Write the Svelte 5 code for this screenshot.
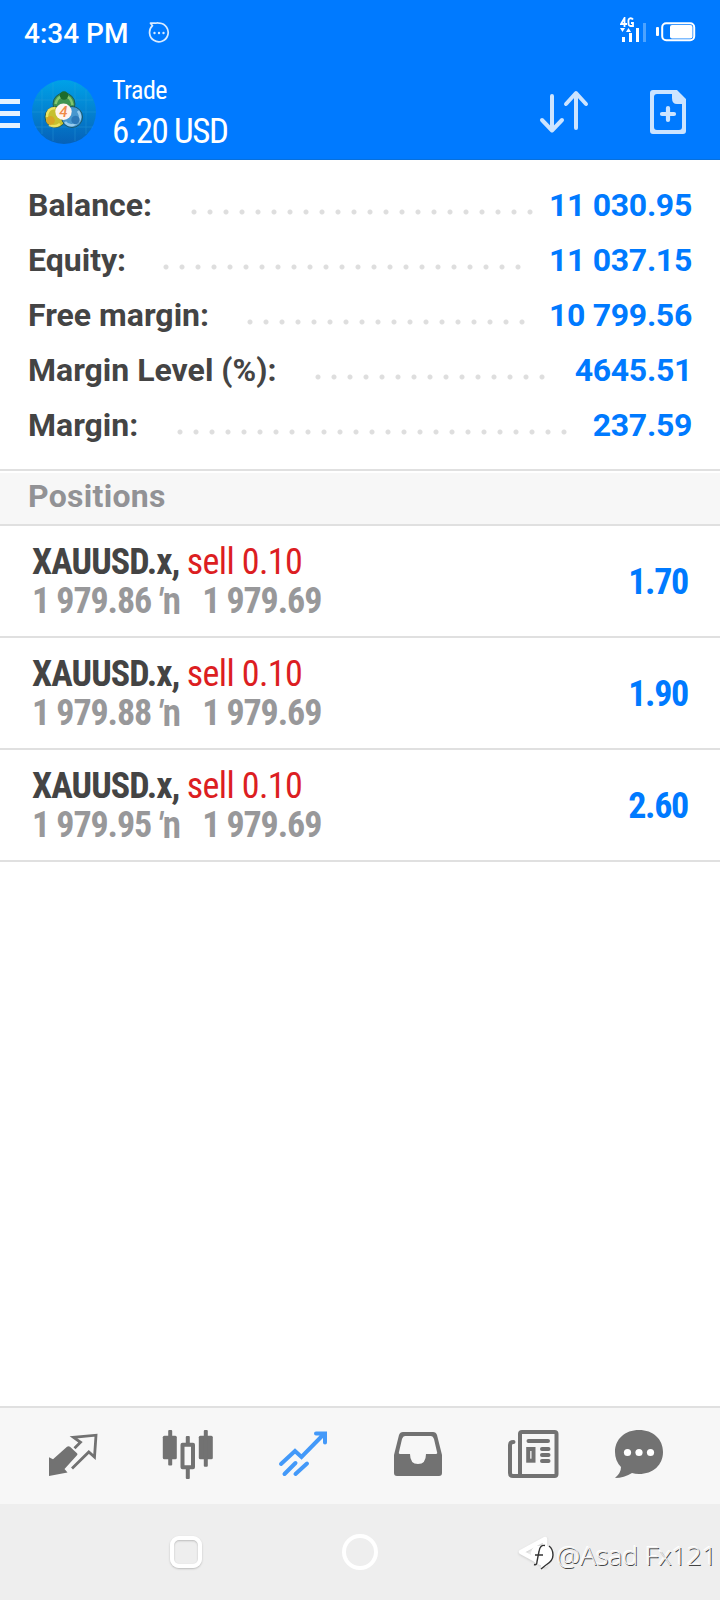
<script lang="ts">
	interface Summary {
		label: string;
		value: string;
		dots: number;
		gap: number;
	}

	const summary: Summary[] = [
		{ label: 'Balance:', value: '11 030.95', dots: 22, gap: 11 },
		{ label: 'Equity:', value: '11 037.15', dots: 23, gap: 23 },
		{ label: 'Free margin:', value: '10 799.56', dots: 18, gap: 19 },
		{ label: 'Margin Level (%):', value: '4645.51', dots: 15, gap: 25 },
		{ label: 'Margin:', value: '237.59', dots: 25, gap: 21 }
	];

	const positions = [
		{ symbol: 'XAUUSD.x,', order: 'sell 0.10', open: '1 979.86', current: '1 979.69', profit: '1.70' },
		{ symbol: 'XAUUSD.x,', order: 'sell 0.10', open: '1 979.88', current: '1 979.69', profit: '1.90' },
		{ symbol: 'XAUUSD.x,', order: 'sell 0.10', open: '1 979.95', current: '1 979.69', profit: '2.60' }
	];

	const tabs = ['quotes', 'charts', 'trade', 'history', 'news', 'messages'];
</script>

<div class="screen">
	<header class="top">
		<div class="status">
			<span class="clock">4:34 PM</span>
			<svg width="22" height="22" viewBox="0 0 22 22">
				<path d="M2.500 1.200h5q2-.6 4 0a9.300 9.300 0 1 1-7 2.500z" fill="none" stroke="#d9ebff" stroke-width="1.700" stroke-linejoin="round" />
				<g fill="#d9ebff"><circle cx="6.500" cy="11" r="1.200" /><circle cx="11" cy="11" r="1.200" /><circle cx="15.500" cy="11" r="1.200" /></g>
			</svg>
			<svg class="signal" width="28" height="26" viewBox="0 0 28 26">
				<path d="M4.500 10V1L1 7h6M13 2.500q-1-1.500-3-1.200-2 .4-1.500 4.200-.2 3.500 2 3.500H13V6h-2" fill="none" stroke="#fff" stroke-width="1.800" />
				<path d="M0 11h5l-2.500 4zM6 15h5l-2.500-4z" fill="#fff" />
				<path d="M2 20h3v5H2zM9 16h3v9H9zM16 11h3v14h-3z" fill="#fff" />
				<path d="M23 6h3v19h-3z" fill="#4da3ff" />
			</svg>
			<svg class="battery" width="40" height="20" viewBox="0 0 40 20">
				<rect x="0" y="5" width="3" height="9" rx="1" fill="#fff" />
				<rect x="6.200" y="1.200" width="32" height="17" rx="4" fill="none" stroke="#fff" stroke-width="2" />
				<rect x="14" y="3" width="22.500" height="13.500" rx="2" fill="#fff" />
			</svg>
		</div>
		<div class="bar">
			<div class="burger"><i></i><i></i><i></i></div>
			<svg width="64" height="64" viewBox="0 0 64 64">
				<defs>
					<linearGradient id="sky" x1="0" y1="0" x2="0" y2="1">
						<stop offset="0" stop-color="#00a2e8" />
						<stop offset="1" stop-color="#0661b8" />
					</linearGradient>
				</defs>
				<circle cx="32" cy="32" r="32" fill="url(#sky)" />
				<path d="M10 10v44M21 3v58M43 3v58M54 10v44M3 20h58M0 32h64M3 47h58" stroke="#33a4dc" stroke-width=".8" opacity=".4" />
				<g stroke="#174a50" stroke-width=".8">
					<circle cx="32" cy="24" r="11" fill="#3f9450" />
					<circle cx="23.500" cy="37" r="10.500" fill="#c6c030" />
					<circle cx="40" cy="37" r="10.500" fill="#4797cf" />
				</g>
				<g fill="none" stroke-width="2.500" opacity=".85">
					<path d="M23.500 24q2-8 8.500-8 7 0 8.500 9" stroke="#90cf77" />
					<path d="M15 37q0-9 8-9M17 45q6 3 11-1" stroke="#f3ea6b" />
					<path d="M46 31q6 9-5 14-5 1-8-3" stroke="#a7d6f4" />
				</g>
				<circle cx="32" cy="15.500" r="4.200" fill="#1d6b2c" />
				<circle cx="18.500" cy="40.500" r="4.400" fill="#d7a526" />
				<circle cx="43.500" cy="40" r="4.200" fill="#2c78b8" />
				<circle cx="31.500" cy="31.800" r="8.200" fill="#fff4ee" />
				<text x="31.500" y="37" text-anchor="middle" font-size="15" font-style="italic" font-weight="500" fill="#ef8a48">4</text>
			</svg>
			<div class="heading">
				<div class="title">Trade</div>
				<div class="total">6.20 USD</div>
			</div>
			<svg width="50" height="44" viewBox="0 0 50 44">
				<path d="M13 6v34M3 30l10 10.500L23 30M37 38V4M27 14L37 3l10 11" fill="none" stroke="#cce4ff" stroke-width="4" stroke-linecap="round" stroke-linejoin="round" />
			</svg>
			<svg class="add" width="36" height="44" viewBox="0 0 36 44">
				<path fill="#cce4ff" fill-rule="evenodd" d="M3 0h24l9 9v32q0 3-3 3H3q-3 0-3-3V3q0-3 3-3zM7 4Q4 4 4 7v30q0 3 3 3h22q3 0 3-3V14h-5q-5 0-5-6V4z" />
				<path d="M18 18v12M12 24h12" stroke="#cce4ff" stroke-width="4.200" stroke-linecap="round" />
			</svg>
		</div>
	</header>

	<section class="summary">
		{#each summary as row}
			<div class="line">
				<span>{row.label}</span>
				<span class="leader" style="width: {row.dots * 16}px; margin-right: {row.gap}px"></span>
				<span class="value">{row.value}</span>
			</div>
		{/each}
	</section>

	<h2 class="section">Positions</h2>

	<main class="list">
		{#each positions as pos}
			<article class="position">
				<div>
					<div class="row"><b>{pos.symbol}</b> <span class="sell">{pos.order}</span></div>
					<div class="row prices">
						<span>{pos.open}</span><span class="mark"><i>′</i>n</span><span>{pos.current}</span>
					</div>
				</div>
				<div class="profit">{pos.profit}</div>
			</article>
		{/each}
	</main>

	<nav class="tabs">
		{#each tabs as tab}
			<div class="tab" class:active={tab === 'trade'}>
				<svg width="56" height="56" viewBox="0 0 56 56">
					{#if tab === 'quotes'}
						<path d="M4 28.300l4 2 14-12.500q1.500-1 3 0l7 6.500q1 1 0 2L19.500 40l3 3.500L4 47z" fill="currentColor" />
						<path d="M29.500 19.300l6-6-7-5L51 6.200 49.500 28l-5.700-5L27 39.500" fill="none" stroke="currentColor" stroke-width="2.800" />
					{:else if tab === 'charts'}
						<g fill="currentColor">
							<rect x="2.800" y="6.700" width="14" height="23.500" rx="1.500" />
							<rect x="8.200" y="1" width="4" height="35.500" rx="1" />
							<rect x="38.800" y="6.700" width="14" height="23.500" rx="1.500" />
							<rect x="43.800" y="1" width="4" height="36.700" rx="1" />
							<rect x="25.800" y="7" width="4" height="8" rx="1" />
							<rect x="25.800" y="39" width="4" height="11" rx="1" />
						</g>
						<rect x="22.500" y="15.700" width="10.500" height="22.500" fill="none" stroke="currentColor" stroke-width="4" stroke-linejoin="round" />
					{:else if tab === 'trade'}
						<path d="M6 35l14-13 6.500 6L48 6M41 4.500h9v9M20.500 34l-11 11M32 34.500L20.500 45" fill="none" stroke="currentColor" stroke-width="4" stroke-linecap="round" />
					{:else if tab === 'history'}
						<path fill-rule="evenodd" d="M13 3h30q3 0 4 3l5 20v18q0 3-3 3H7q-3 0-3-3V26L9 6q1-3 4-3zM15 7q-2 0-3 3L9 23q-1 2 2 2h9q0 10 8 10t8-10h9q3 0 2-2L44 10q-1-3-3-3z" fill="currentColor" />
					{:else if tab === 'news'}
						<g fill="none" stroke="currentColor" stroke-width="4" stroke-linecap="round">
							<rect x="15" y="3" width="36.500" height="44" rx="2" />
							<path d="M8.500 13Q5 13 5 16v28q0 3 3 3h8M23.500 12H43M37 20h6.500M37 26h6.500M37 32h6.500" />
							<rect x="23.200" y="20" width="5.300" height="11.700" />
						</g>
					{:else}
						<path d="M28 1c14 0 24 9 24 22S42 45 28 45q-4 0-7-1-8 5-17 5 6-5 6-11Q4 32 4 23C4 10 14 1 28 1z" fill="currentColor" />
						<g fill="#fff"><circle cx="16.500" cy="23.500" r="3.600" /><circle cx="28" cy="23.500" r="3.600" /><circle cx="39.500" cy="23.500" r="3.600" /></g>
					{/if}
				</svg>
			</div>
		{/each}
	</nav>

	<footer class="system">
		<span class="recent"></span>
		<span class="home"></span>
		<svg class="back" width="34" height="38" viewBox="0 0 34 38">
			<path d="M27 6L3 19l24 13z" fill="none" stroke="#fff" stroke-width="4.500" stroke-linejoin="round" />
		</svg>
		<div class="watermark">
			<svg width="26" height="30" viewBox="0 0 26 30">
				<path d="M4 6h13q5 3 5 9 0 7-8 10l-4 4v-4Q0 23 0 14q0-5 4-8z" fill="#fff" />
				<path d="M18 6q4 3 4 9 0 6-7 10l-5 4M14 5.500q-5-1-6 6l-2 10q0 4-3 3M4 15h8" fill="none" stroke="#333" stroke-width="1.400" />
			</svg>
			<span>@Asad Fx121</span>
		</div>
	</footer>
</div>

<style>
	:global(body) {
		background: #fff;
	}

	.screen {
		display: flex;
		flex-direction: column;
		width: 720px;
		height: 1600px;
		overflow: hidden;
		font-family: Roboto, 'Liberation Sans', sans-serif;
		color: #444;
	}

	.top {
		flex: none;
		height: 160px;
		box-sizing: border-box;
		border-bottom: 1px solid #0870dc;
		background: #007aff;
		color: #fff;
	}

	.status {
		display: flex;
		align-items: center;
		height: 66px;
		padding: 0 24px;
	}

	.clock {
		width: 124px;
		font-size: 28px;
		font-weight: 500;
	}

	.signal {
		margin-left: auto;
		margin-top: -6px;
	}

	.battery {
		margin: -3px 0 0 8px;
	}

	.bar {
		display: flex;
		align-items: center;
		height: 92px;
	}

	.burger {
		display: grid;
		gap: 7px;
		width: 20px;
		margin: 3px 12px 0 0;
	}

	.burger i {
		height: 5px;
		background: #e5f2ff;
	}

	.heading {
		width: 427px;
		padding-left: 16px;
		font-stretch: 75%;
		white-space: nowrap;
	}

	.title {
		font-size: 26px;
		line-height: 36px;
		padding-bottom: 3px;
		letter-spacing: -0.5px;
	}

	.total {
		font-size: 35px;
		line-height: 42px;
		letter-spacing: -1.4px;
	}

	.add {
		margin-left: 61px;
	}

	.summary {
		flex: none;
		height: 309px;
		box-sizing: border-box;
		padding: 17px 28px 0;
		font-size: 32px;
		font-weight: 700;
	}

	.line {
		display: flex;
		align-items: center;
		height: 55px;
		white-space: nowrap;
	}

	.leader {
		height: 6px;
		margin: 15px 0 0 auto;
		background: radial-gradient(circle at 50% 50%, #dedede 2px, transparent 3px) 0 0 / 16px 6px;
	}

	.value {
		color: #007aff;
		letter-spacing: -0.3px;
	}

	.section {
		flex: none;
		height: 57px;
		box-sizing: border-box;
		margin: 0;
		padding-left: 28px;
		border: solid #e0e0e0;
		border-width: 2px 0;
		background: #f7f7f7;
		box-shadow: inset 0 2px #fff;
		font-size: 32px;
		font-weight: 700;
		line-height: 51px;
		letter-spacing: 0.3px;
		color: #929295;
	}

	.list {
		flex: 1;
	}

	.position {
		display: flex;
		justify-content: space-between;
		align-items: center;
		height: 108px;
		padding: 2px 32px 0;
		border-bottom: 2px solid #e0e0e0;
		font-size: 36px;
		font-stretch: 75%;
		letter-spacing: -1.1px;
	}

	.row {
		height: 39px;
		line-height: 39px;
		white-space: nowrap;
	}

	.row b {
		letter-spacing: -0.9px;
	}

	.sell {
		color: #dc1e22;
		letter-spacing: -0.6px;
	}

	.prices {
		display: flex;
		font-weight: 700;
		color: #98989a;
	}

	.mark {
		display: inline-flex;
		width: 45px;
		margin-left: 6px;
		font-size: 38px;
		font-weight: 600;
		font-stretch: 85%;
		letter-spacing: 0;
	}

	.mark i {
		font-size: 34px;
		font-stretch: 75%;
		line-height: 36px;
	}

	.profit {
		font-weight: 700;
		color: #007aff;
		letter-spacing: -1.3px;
	}

	.tabs {
		flex: none;
		display: grid;
		grid-template-columns: repeat(5, 115px) 96px;
		height: 96px;
		padding: 0 0 0 15.6px;
		border-top: 2px solid #e0e0e0;
		background: #f7f7f7;
		color: #727272;
	}

	.tab {
		display: flex;
		justify-content: center;
		padding-top: 21px;
	}

	.active {
		color: #4399f9;
	}

	.system {
		position: relative;
		flex: none;
		display: flex;
		align-items: center;
		height: 96px;
		padding-left: 170px;
		background: #eee;
	}

	.recent {
		width: 24px;
		height: 24px;
		border: 4px solid #fff;
		border-radius: 9px;
		box-shadow: 0 1px 2px #bbb, inset 0 1px 2px #bbb;
	}

	.home {
		width: 28px;
		height: 28px;
		margin: 0 140px;
		border: 4px solid #fff;
		border-radius: 50%;
	}

	.back {
		filter: drop-shadow(0 1px 1px #ccc);
	}

	.watermark {
		position: absolute;
		right: 3px;
		bottom: 27px;
		display: flex;
		align-items: center;
		font: 300 26.5px/36px 'Open Sans', 'Noto Sans', sans-serif;
		color: #f2f2f2;
		text-shadow: 0.8px 0.8px 0 #444, -1px -1px 0 #fff;
	}
</style>
